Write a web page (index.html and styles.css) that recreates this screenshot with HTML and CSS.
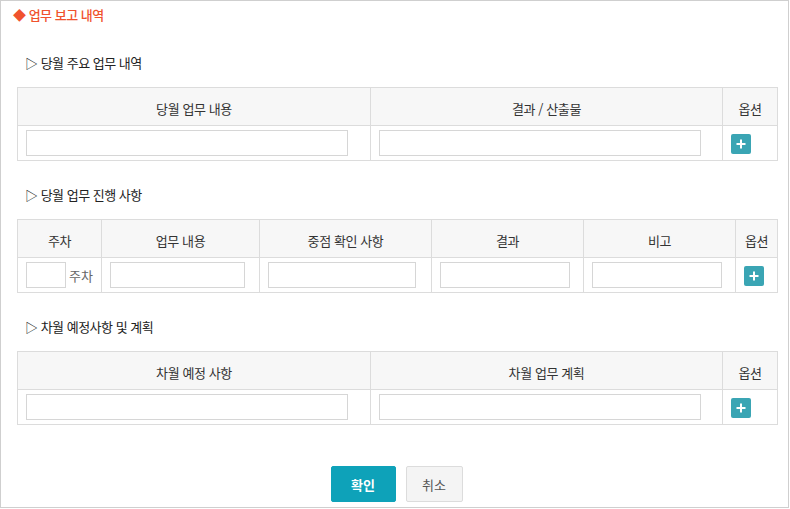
FILE: index.html
```html
<!DOCTYPE html>
<html lang="ko">
<head>
<meta charset="utf-8">
<link rel="stylesheet" href="styles.css">
</head>
<body>
<div class="page">
  <h1 class="title">◆ 업무 보고 내역</h1>
  <div class="content">
    <h2 class="sub first">▷ 당월 주요 업무 내역</h2>
    <table class="grid">
      <colgroup><col style="width:353px"><col style="width:352px"><col style="width:55px"></colgroup>
      <thead><tr><th>당월 업무 내용</th><th>결과 / 산출물</th><th>옵션</th></tr></thead>
      <tbody><tr>
        <td><input class="inp w322" type="text"></td>
        <td><input class="inp w322" type="text"></td>
        <td><button class="plus" type="button"><svg width="10" height="10" viewBox="0 0 10 10"><path d="M5 0.5V9.5M0.5 5H9.5" stroke="#fff" stroke-width="2"/></svg></button></td>
      </tr></tbody>
    </table>

    <h2 class="sub">▷ 당월 업무 진행 사항</h2>
    <table class="grid">
      <colgroup><col style="width:84px"><col style="width:158px"><col style="width:172px"><col style="width:152px"><col style="width:152px"><col style="width:42px"></colgroup>
      <thead><tr><th>주차</th><th>업무 내용</th><th>중점 확인 사항</th><th>결과</th><th>비고</th><th>옵션</th></tr></thead>
      <tbody><tr>
        <td><input class="inp w40" type="text"><span class="unit">주차</span></td>
        <td><input class="inp w135" type="text"></td>
        <td><input class="inp w148" type="text"></td>
        <td><input class="inp w130" type="text"></td>
        <td><input class="inp w130" type="text"></td>
        <td><button class="plus" type="button"><svg width="10" height="10" viewBox="0 0 10 10"><path d="M5 0.5V9.5M0.5 5H9.5" stroke="#fff" stroke-width="2"/></svg></button></td>
      </tr></tbody>
    </table>

    <h2 class="sub">▷ 차월 예정사항 및 계획</h2>
    <table class="grid">
      <colgroup><col style="width:353px"><col style="width:352px"><col style="width:55px"></colgroup>
      <thead><tr><th>차월 예정 사항</th><th>차월 업무 계획</th><th>옵션</th></tr></thead>
      <tbody><tr>
        <td><input class="inp w322" type="text"></td>
        <td><input class="inp w322" type="text"></td>
        <td><button class="plus" type="button"><svg width="10" height="10" viewBox="0 0 10 10"><path d="M5 0.5V9.5M0.5 5H9.5" stroke="#fff" stroke-width="2"/></svg></button></td>
      </tr></tbody>
    </table>

    <div class="actions">
      <button class="btn ok" type="button">확인</button>
      <button class="btn cancel" type="button">취소</button>
    </div>
  </div>
</div>
</body>
</html>
```
FILE: styles.css
```css
* { box-sizing: border-box; }
html, body { margin: 0; padding: 0; background: #fff; }
body {
  font-family: "Noto Sans CJK KR", "Noto Sans", sans-serif;
  font-size: 13px;
  color: #333;
}
.page {
  width: 789px;
  height: 508px;
  border: 1px solid #cfcfcf;
  background: #fff;
}
.title {
  margin: 5px 0 0 12px;
  font-size: 13px;
  font-weight: 500;
  line-height: 18px;
  color: #f0522e;
  letter-spacing: -0.5px;
}
.content {
  padding: 0 11px 0 16px;
}
.sub {
  margin: 25px 0 15px 8px;
  font-size: 13px;
  font-weight: 400;
  line-height: 18px;
  color: #222;
  letter-spacing: -0.5px;
}
.sub.first { margin-top: 30px; }
.grid {
  width: 760px;
  border-collapse: collapse;
  table-layout: fixed;
  border: 1px solid #dcdcdc;
}
.grid th {
  height: 38px;
  background: #f7f7f7;
  border: 1px solid #dcdcdc;
  font-weight: 400;
  font-size: 13px;
  color: #333;
  text-align: center;
  padding: 4px 0 0;
  letter-spacing: -0.4px;
}
.grid td {
  height: 35px;
  border: 1px solid #dcdcdc;
  padding: 0 0 0 8px;
  vertical-align: middle;
  white-space: nowrap;
}
.inp {
  display: inline-block;
  vertical-align: middle;
  height: 26px;
  border: 1px solid #d6d6d6;
  background: #fff;
  margin: 0;
  padding: 0 4px;
  font: inherit;
  outline: none;
}
.w322 { width: 322px; }
.w40 { width: 40px; }
.w135 { width: 135px; }
.w148 { width: 148px; }
.w130 { width: 130px; }
.unit {
  display: inline-block;
  vertical-align: middle;
  margin-left: 3px;
  color: #666;
  font-size: 13px;
}
.plus {
  display: flex;
  align-items: center;
  justify-content: center;
  width: 20px;
  height: 20px;
  margin: 1px 0 0 0;
  padding: 0;
  border: 0;
  border-radius: 2px;
  background: #3aa5b4;
}
.actions {
  display: flex;
  justify-content: center;
  gap: 10px;
  margin-top: 41px;
  padding-right: 1px;
}
.btn {
  height: 36px;
  border-radius: 2px;
  font-family: inherit;
  font-size: 13px;
  padding: 0;
}
.ok {
  width: 65px;
  background: #0ea2b9;
  border: 1px solid #0ea2b9;
  color: #fff;
  font-weight: 700;
}
.cancel {
  width: 57px;
  background: #f4f4f4;
  border: 1px solid #dcdcdc;
  color: #555;
}
```
